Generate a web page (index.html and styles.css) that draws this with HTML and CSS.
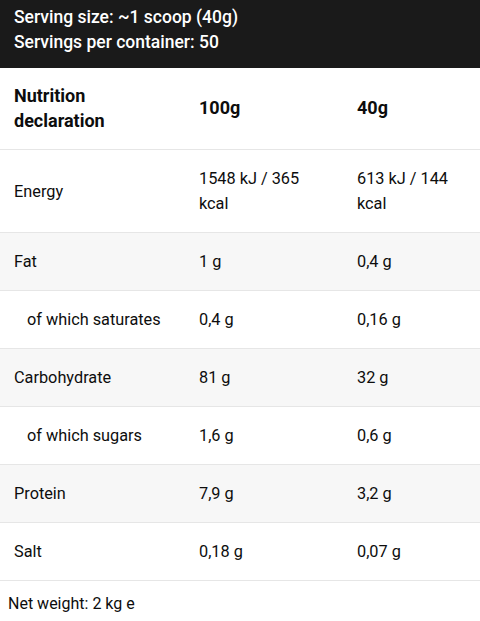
FILE: index.html
```html
<!DOCTYPE html>
<html lang="en">
<head>
  <meta charset="UTF-8">
  <title>Nutrition</title>
  <meta name="viewport" content="width=device-width, initial-scale=1.0">
  <link rel="stylesheet" href="styles.css">
</head>
<body>

  <header class="serving">
    <div>Serving size: ~1 scoop (40g)</div>
    <div>Servings per container: 50</div>
  </header>

  <table class="nutrition">
    <thead>
      <tr>
        <th class="label">Nutrition declaration</th>
        <th class="col-100">100g</th>
        <th>40g</th>
      </tr>
    </thead>
    <tbody>
      <tr>
        <td class="label">Energy</td>
        <td>1548 kJ / 365 kcal</td>
        <td>613 kJ / 144 kcal</td>
      </tr>
      <tr>
        <td class="label">Fat</td>
        <td>1 g</td>
        <td>0,4 g</td>
      </tr>
      <tr>
        <td class="label sub">of which saturates</td>
        <td>0,4 g</td>
        <td>0,16 g</td>
      </tr>
      <tr>
        <td class="label">Carbohydrate</td>
        <td>81 g</td>
        <td>32 g</td>
      </tr>
      <tr>
        <td class="label sub">of which sugars</td>
        <td>1,6 g</td>
        <td>0,6 g</td>
      </tr>
      <tr>
        <td class="label">Protein</td>
        <td>7,9 g</td>
        <td>3,2 g</td>
      </tr>
      <tr>
        <td class="label">Salt</td>
        <td>0,18 g</td>
        <td>0,07 g</td>
      </tr>
    </tbody>
  </table>

  <p class="net-weight">Net weight: 2 kg e</p>

</body>
</html>
```

FILE: styles.css
```css
body {
  font-family: Roboto, "Liberation Sans", sans-serif;
  background-color: #ffffff;
  color: #0d0d0d;
  margin: 0;
}
.serving {
  background-color: #1a1a1a;
  color: #ffffff;
  font-size: 17.5px;
  font-weight: 500;
  line-height: 25px;
  padding: 5px 14px 13px;
}
.nutrition {
  width: 100%;
  border-collapse: collapse;
  font-size: 16.3px;
  line-height: 25px;
}
.nutrition th,
.nutrition td {
  text-align: left;
  vertical-align: middle;
  padding: 16px 14px;
  border-bottom: 1px solid #e6e6e6;
}
.nutrition th {
  font-size: 18px;
  font-weight: 700;
  line-height: 24.5px;
}
.nutrition .label {
  width: 157px;
}
.nutrition .col-100 {
  width: 130px;
}
.nutrition tbody tr:nth-child(even) {
  background-color: #f7f7f7;
}
.nutrition .sub {
  padding-left: 27px;
  width: 144px;
}
.net-weight {
  margin: 0;
  padding: 12px 8px;
  font-size: 16px;
  line-height: 22px;
}
```
